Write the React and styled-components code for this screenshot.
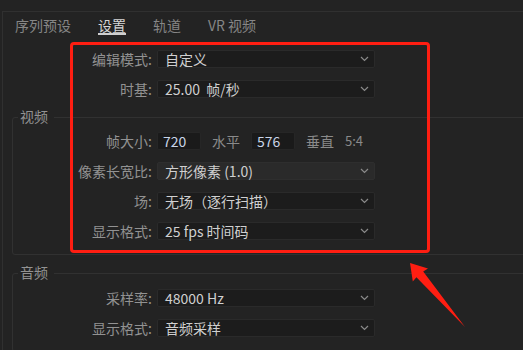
import React from "react";
import styled, { createGlobalStyle } from "styled-components";

const Global = createGlobalStyle`
  html, body { margin: 0; padding: 0; background: #232323; }
  * { box-sizing: border-box; }
`;

const FONT = `"Noto Sans CJK SC", "Noto Sans", sans-serif`;

const Page = styled.div`
  position: relative;
  width: 523px;
  height: 350px;
  overflow: hidden;
  background: #232323;
  padding: 11px 0 0 2px;
  font-family: ${FONT};
  font-size: 14px;
  color: #9c9c9c;
`;

const Panel = styled.div`
  border-top: 1px solid #303030;
  border-left: 1px solid #303030;
  height: 400px;
`;

const TabBar = styled.div`
  display: flex;
  gap: 27px;
  padding: 5px 0 0 12px;
  margin-bottom: 9px;
`;

const Tab = styled.div`
  line-height: 16px;
  white-space: pre;
  color: ${(p) => (p.$active ? "#d6d6d6" : "#868686")};
  border-bottom: 2px solid ${(p) => (p.$active ? "#cfcfcf" : "transparent")};
`;

const Row = styled.div`
  display: grid;
  grid-template-columns: ${(p) => p.$labelW}px auto;
  column-gap: 5px;
  align-items: center;
  height: 30px;
`;

const Label = styled.div`
  text-align: right;
  white-space: nowrap;
  line-height: 16px;
  color: #929292;
`;

const Select = styled.div`
  width: 218px;
  height: 18px;
  display: flex;
  align-items: center;
  justify-content: space-between;
  padding: 0 5px 0 7px;
  background: ${(p) => (p.$disabled ? "#2a2a2a" : "#1c1c1c")};
  border: 1px solid ${(p) => (p.$disabled ? "#2e2e2e" : "#2a2a2a")};
  border-radius: 2px;
  color: #d0d0d0;
  line-height: 16px;
  white-space: pre;
`;

const Chevron = () => (
  <svg width="9" height="6" viewBox="0 0 9 6">
    <path d="M1 1 L4.5 4.5 L8 1" fill="none" stroke="#8a8a8a" strokeWidth="1.2" />
  </svg>
);

const Inline = styled.div`
  display: flex;
  align-items: center;
`;

const NumBox = styled.div`
  width: 44px;
  height: 18px;
  padding: 0 5px;
  background: #1a1a1a;
  border: 1px solid #262626;
  border-radius: 2px;
  color: #c9d5e8;
  line-height: 16px;
`;

const Unit = styled.span`
  margin: 0 11px;
  line-height: 16px;
  color: #8a8a8a;
`;

const Ratio = styled.span`
  line-height: 16px;
  color: #8a8a8a;
  font-size: 13px;
`;

const Group = styled.div`
  position: relative;
  margin: ${(p) => p.$mt}px -40px 0 9px;
  padding: ${(p) => p.$pt}px 0 8px 0;
  border: 1px solid #313131;
  border-radius: 3px;
`;

const Legend = styled.span`
  position: absolute;
  top: -10px;
  left: 5px;
  padding: 0 6px 0 2px;
  line-height: 16px;
  background: #232323;
  color: #929292;
`;

const Highlight = styled.div`
  position: absolute;
  left: 70px;
  top: 42px;
  width: 360px;
  height: 211px;
  border: 3px solid #ff1e12;
  border-radius: 4px;
  pointer-events: none;
`;

const ArrowSvg = styled.svg`
  position: absolute;
  left: 0;
  top: 0;
  pointer-events: none;
`;

const SelectRow = ({ labelW, label, value, disabled }) => (
  <Row $labelW={labelW}>
    <Label>{label}</Label>
    <Select $disabled={disabled}>
      <span>{value}</span>
      <Chevron />
    </Select>
  </Row>
);

export default function App() {
  return (
    <Page>
      <Global />
      <Panel>
        <TabBar>
          <Tab>序列预设</Tab>
          <Tab $active>设置</Tab>
          <Tab>轨道</Tab>
          <Tab>VR 视频</Tab>
        </TabBar>

        <SelectRow labelW={149} label="编辑模式:" value="自定义" />
        <SelectRow labelW={149} label="时基:" value="25.00  帧/秒" />

        <Group $mt={13} $pt={8}>
          <Legend>视频</Legend>
          <Row $labelW={139}>
            <Label>帧大小:</Label>
            <Inline>
              <NumBox>720</NumBox>
              <Unit>水平</Unit>
              <NumBox>576</NumBox>
              <Unit>垂直</Unit>
              <Ratio>5:4</Ratio>
            </Inline>
          </Row>
          <SelectRow labelW={139} label="像素长宽比:" value="方形像素 (1.0)" disabled />
          <SelectRow labelW={139} label="场:" value="无场（逐行扫描）" />
          <SelectRow labelW={139} label="显示格式:" value="25 fps 时间码" />
        </Group>

        <Group $mt={18} $pt={9}>
          <Legend>音频</Legend>
          <SelectRow labelW={139} label="采样率:" value="48000 Hz" />
          <SelectRow labelW={139} label="显示格式:" value="音频采样" />
        </Group>
      </Panel>

      <Highlight />
      <ArrowSvg width="523" height="350" viewBox="0 0 523 350">
        <polygon
          points="410,263 428,268.5 423.2,271.5 465,327 416.4,277.3 412.8,281.6"
          fill="#ff1e12"
        />
      </ArrowSvg>
    </Page>
  );
}
